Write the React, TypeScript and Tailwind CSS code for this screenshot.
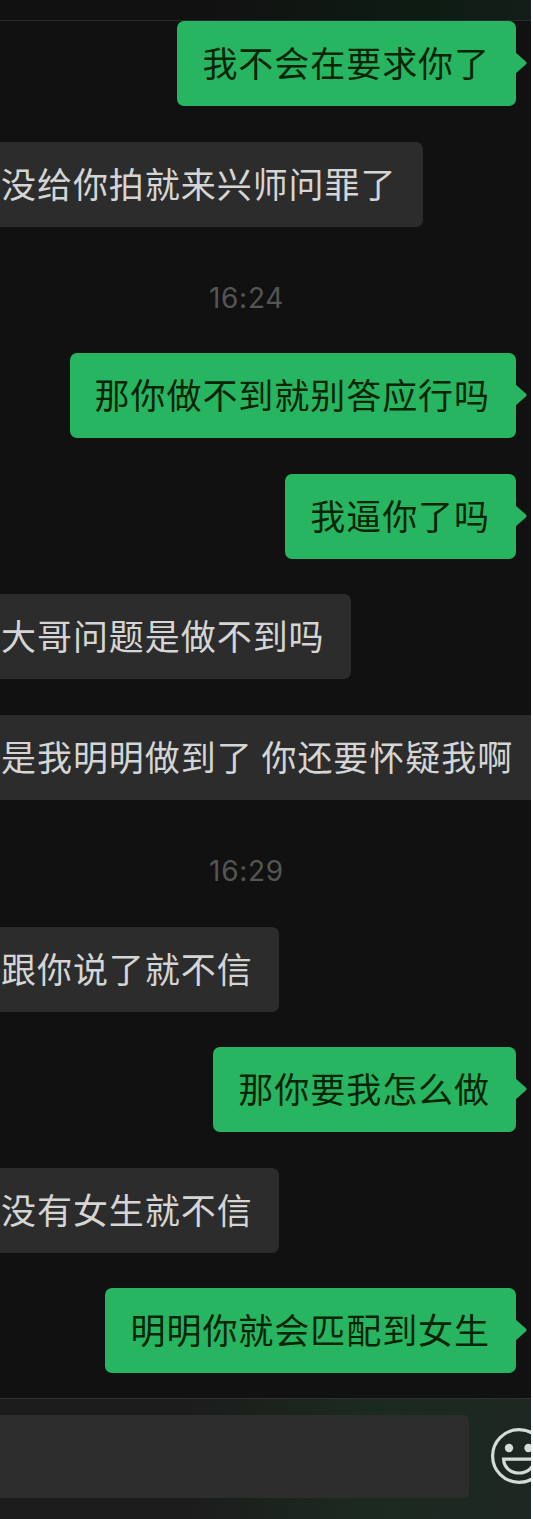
import React from "react";

type Item =
  | { kind: "mine" | "theirs"; text: string }
  | { kind: "time"; text: string };

const items: Item[] = [
  { kind: "mine", text: "我不会在要求你了" },
  { kind: "theirs", text: "没给你拍就来兴师问罪了" },
  { kind: "time", text: "16:24" },
  { kind: "mine", text: "那你做不到就别答应行吗" },
  { kind: "mine", text: "我逼你了吗" },
  { kind: "theirs", text: "大哥问题是做不到吗" },
  { kind: "theirs", text: "是我明明做到了 你还要怀疑我啊" },
  { kind: "time", text: "16:29" },
  { kind: "theirs", text: "跟你说了就不信" },
  { kind: "mine", text: "那你要我怎么做" },
  { kind: "theirs", text: "没有女生就不信" },
  { kind: "mine", text: "明明你就会匹配到女生" },
];

const textStyle =
  "font-['Noto_Sans_CJK_SC',sans-serif] text-[35px] leading-[82px] tracking-[0.95px] whitespace-pre";

const MyMessage = ({ text }: { text: string }) => (
  <div className="flex justify-end pr-[15px] mb-[35.5px]">
    <div
      className={`relative h-[85px] pl-[25px] pr-[26px] rounded-[7px] bg-[#28b561] text-[#062506] ${textStyle}`}
    >
      {text}
      <svg
        className="absolute left-full top-[31px] -ml-px"
        width="12"
        height="22"
        viewBox="0 0 12 22"
        fill="#28b561"
      >
        <path d="M0 0 L10.8 9.6 Q12.4 11 10.8 12.4 L0 22 Z" />
      </svg>
    </div>
  </div>
);

const TheirMessage = ({ text }: { text: string }) => (
  <div className="flex mb-[35.4px]">
    <div
      className={`shrink-0 h-[85px] pl-px pr-[26.5px] rounded-r-[7px] bg-[#2c2c2c] text-[#d5d5d5] ${textStyle}`}
    >
      {text}
    </div>
  </div>
);

const Timestamp = ({ text }: { text: string }) => (
  <div className="h-[91.5px] pr-[38px] text-center font-['Inter',sans-serif] text-[28px] leading-[73px] tracking-[0.7px] text-[#555555]">
    {text}
  </div>
);

const SmileIcon = () => (
  <svg
    className="shrink-0"
    width="58"
    height="58"
    viewBox="0 0 58 58"
    fill="none"
    stroke="#d5dcd7"
    strokeWidth="3.2"
  >
    <circle cx="29" cy="29" r="26.4" />
    <circle cx="19" cy="21" r="4.2" fill="#d5dcd7" stroke="none" />
    <circle cx="38.5" cy="21" r="4.2" fill="#d5dcd7" stroke="none" />
    <path d="M13.6 32.2 H44.4 C44 40.6 37.6 46 29 46 S14 40.6 13.6 32.2 Z" />
  </svg>
);

export default function App() {
  return (
    <div className="w-[533px] h-[1519px] bg-white overflow-hidden">
      <div className="flex flex-col w-[531px] h-full bg-[#111111] overflow-hidden">
        <header className="shrink-0 h-[21px] border-b border-[#2a2b2a] bg-linear-to-r from-[#111111] from-40% via-[#0d1c13] via-80% to-[#141d18]" />
        <main className="shrink-0 h-[1377px] overflow-hidden">
          {items.map((item, i) => {
            if (item.kind === "time") {
              return <Timestamp key={i} text={item.text} />;
            }
            return item.kind === "mine" ? (
              <MyMessage key={i} text={item.text} />
            ) : (
              <TheirMessage key={i} text={item.text} />
            );
          })}
        </main>
        <footer className="flex flex-1 items-start border-t border-[#313332] bg-linear-to-r from-[#1c1c1c] from-35% via-[#1b2a20] via-70% to-[#1e2622]">
          <div className="shrink-0 w-[469px] h-[83px] mt-4 rounded-r-[5px] bg-[#2d2d2d]" />
          <div className="flex mt-7 ml-[21px]">
            <SmileIcon />
          </div>
        </footer>
      </div>
    </div>
  );
}
